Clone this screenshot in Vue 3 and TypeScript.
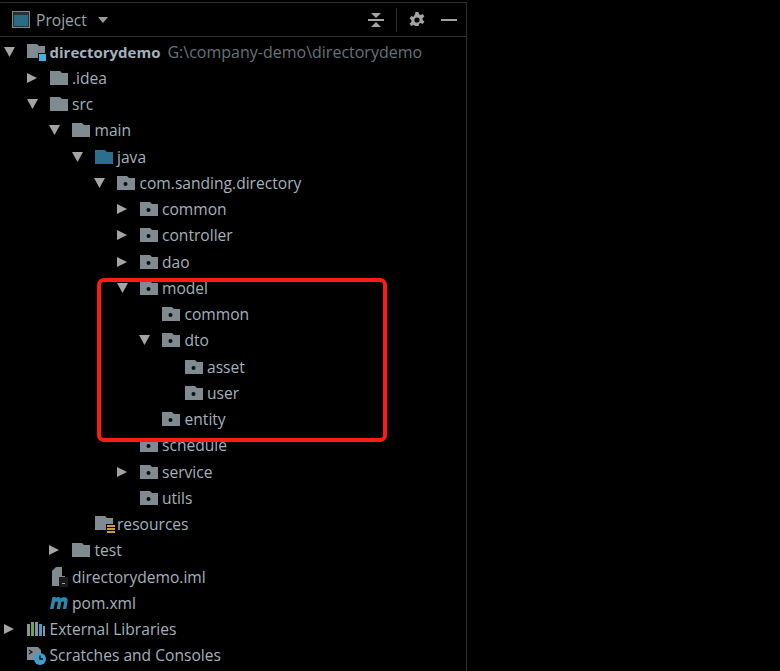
<script setup lang="ts">
type IconKind = 'module' | 'folder' | 'source' | 'package' | 'resources' | 'iml' | 'maven' | 'libs' | 'scratch'

interface TreeRow {
  label: string
  depth: number
  icon: IconKind
  arrow?: 'open' | 'closed'
  bold?: boolean
  hint?: string
}

const rows: TreeRow[] = [
  { label: 'directorydemo', depth: 0, icon: 'module', arrow: 'open', bold: true, hint: 'G:\\company-demo\\directorydemo' },
  { label: '.idea', depth: 1, icon: 'folder', arrow: 'closed' },
  { label: 'src', depth: 1, icon: 'folder', arrow: 'open' },
  { label: 'main', depth: 2, icon: 'folder', arrow: 'open' },
  { label: 'java', depth: 3, icon: 'source', arrow: 'open' },
  { label: 'com.sanding.directory', depth: 4, icon: 'package', arrow: 'open' },
  { label: 'common', depth: 5, icon: 'package', arrow: 'closed' },
  { label: 'controller', depth: 5, icon: 'package', arrow: 'closed' },
  { label: 'dao', depth: 5, icon: 'package', arrow: 'closed' },
  { label: 'model', depth: 5, icon: 'package', arrow: 'open' },
  { label: 'common', depth: 6, icon: 'package' },
  { label: 'dto', depth: 6, icon: 'package', arrow: 'open' },
  { label: 'asset', depth: 7, icon: 'package' },
  { label: 'user', depth: 7, icon: 'package' },
  { label: 'entity', depth: 6, icon: 'package' },
  { label: 'schedule', depth: 5, icon: 'package' },
  { label: 'service', depth: 5, icon: 'package', arrow: 'closed' },
  { label: 'utils', depth: 5, icon: 'package' },
  { label: 'resources', depth: 3, icon: 'resources' },
  { label: 'test', depth: 2, icon: 'folder', arrow: 'closed' },
  { label: 'directorydemo.iml', depth: 1, icon: 'iml' },
  { label: 'pom.xml', depth: 1, icon: 'maven' },
  { label: 'External Libraries', depth: 0, icon: 'libs', arrow: 'closed' },
  { label: 'Scratches and Consoles', depth: 0, icon: 'scratch' },
]

const folderPath = 'M0 0h10l2 2h6v12H0z'
</script>

<template>
  <div class="window">
    <section class="panel">
      <header class="toolbar">
        <svg class="window-icon" width="18" height="17" viewBox="0 0 18 17">
          <rect x="0.5" y="0.5" width="17" height="16" fill="#2a3034" stroke="#7d878e" />
          <rect x="2" y="4" width="14" height="11" fill="#2b6b85" />
        </svg>
        <span class="title">Project</span>
        <svg class="caret" width="10" height="6" viewBox="0 0 10 6"><path d="M0 0h10L5 6z" fill="#9a9a9a" /></svg>
        <div class="actions">
          <svg width="16" height="20" viewBox="0 0 16 20">
            <path d="M3 3h10L8 8zM3 17h10L8 12z" fill="#a3a3a3" />
            <rect x="0" y="9" width="16" height="2" fill="#a3a3a3" />
          </svg>
          <span class="sep"></span>
          <svg width="16" height="16" viewBox="0 0 16 16">
            <path d="M6.5 0h3l.5 2.3 1.7.8 2.1-1.2 1.6 2.6-1.8 1.5v2l1.8 1.5-1.6 2.6-2.1-1.2-1.7.8-.5 2.3h-3L6 13.7l-1.7-.8-2.1 1.2-1.6-2.6 1.8-1.5v-2L.6 6.5l1.6-2.6 2.1 1.2L6 2.3zM8 5.4a2.6 2.6 0 1 0 0 5.2 2.6 2.6 0 0 0 0-5.2z" fill="#a3a3a3" fill-rule="evenodd" />
          </svg>
          <span class="dash"></span>
        </div>
      </header>

      <ul class="tree">
        <li
          v-for="(row, i) in rows"
          :key="i"
          class="row"
          :style="{ paddingLeft: `${4 + row.depth * 22.5}px` }"
        >
          <span class="arrow-slot">
            <svg v-if="row.arrow === 'open'" width="12" height="10" viewBox="0 0 12 10"><path d="M0 0h11L5.500 10z" fill="#a4a4a4" /></svg>
            <svg v-else-if="row.arrow === 'closed'" width="10" height="10" viewBox="0 0 10 10"><path d="M0 0l10 5-10 5z" fill="#a4a4a4" /></svg>
          </span>
          <span class="icon-slot">
            <svg width="20" height="20" viewBox="0 0 20 20">
              <g v-if="row.icon === 'folder'" transform="translate(0 3)"><path :d="folderPath" fill="#7f8b91" /></g>
              <g v-else-if="row.icon === 'source'" transform="translate(0 3)"><path :d="folderPath" fill="#2b6f8c" /></g>
              <g v-else-if="row.icon === 'package'" transform="translate(0 3)">
                <path :d="folderPath" fill="#7f8b91" />
                <circle cx="8.500" cy="8" r="2" fill="#0a0a0a" />
              </g>
              <g v-else-if="row.icon === 'module'" transform="translate(0 2)">
                <path :d="folderPath" fill="#7f8b91" />
                <rect x="11" y="9" width="8" height="8" fill="#000" />
                <rect x="12" y="10" width="7" height="7" fill="#3fb1e3" />
              </g>
              <g v-else-if="row.icon === 'resources'" transform="translate(0 2)">
                <path :d="folderPath" fill="#7f8b91" />
                <rect x="11" y="8" width="9" height="10" fill="#000" />
                <path d="M12 9h8v2h-8zM12 12h8v2h-8zM12 15h8v2h-8z" fill="#d09a3c" />
              </g>
              <g v-else-if="row.icon === 'iml'">
                <path d="M6 0h6v9h3v10H2V4z" fill="#7f8b91" />
                <rect x="9" y="10" width="9" height="10" fill="#1a1a1a" />
                <rect x="12" y="16" width="3" height="1" fill="#a4a4a4" />
              </g>
              <g v-else-if="row.icon === 'maven'" transform="translate(0 -1)">
                <path d="M0 17l2.400-12h3.400l-.2 1.300c1.300-1.500 3.600-1.800 4.700-.2.100.2.200.3.200.4 1.700-1.700 6.300-2.100 7.100.8.200.8 0 1.800-.2 2.800L16.300 17h-3.500l1.200-6.300c.2-1.400-1.400-1.800-2.700-.5L10 17H6.600l1.200-6.300c.2-1.400-1.500-1.800-2.800-.5L3.500 17z" fill="#2f86ad" />
              </g>
              <g v-else-if="row.icon === 'libs'">
                <rect x="0" y="5" width="3" height="12" fill="#8a9499" />
                <rect x="4" y="3" width="3" height="14" fill="#6aa84f" />
                <rect x="8" y="3" width="3" height="14" fill="#8a9499" />
                <rect x="12" y="5" width="3" height="12" fill="#3fa0d0" />
                <rect x="16" y="7" width="2" height="10" fill="#8a9499" />
              </g>
              <g v-else-if="row.icon === 'scratch'">
                <path d="M0 2h11l3 3v4a6 6 0 0 0-6 6H0z" fill="#7f8b91" />
                <path d="M2 5l3 2-3 2" fill="none" stroke="#111" stroke-width="1.200" />
                <circle cx="13" cy="14" r="6" fill="#3b9fd1" />
                <path d="M13 10.500V14h3" fill="none" stroke="#0a0a0a" stroke-width="1.400" />
              </g>
            </svg>
          </span>
          <span class="label" :class="{ bold: row.bold }">{{ row.label }}</span>
          <span v-if="row.hint" class="hint">{{ row.hint }}</span>
        </li>
      </ul>
    </section>
    <div class="highlight"></div>
  </div>
</template>

<style>
html,
body {
  margin: 0;
  background: #000;
}
</style>

<style scoped>
.window {
  position: relative;
  width: 780px;
  height: 671px;
  overflow: hidden;
  background: #000;
  font-family: "Open Sans", "Noto Sans", sans-serif;
}

.panel {
  width: 467px;
  height: 669px;
  margin-top: 2px;
  border-top: 1px solid #2e2e2e;
  border-right: 1px solid #2e2e2e;
  box-sizing: border-box;
}

.toolbar {
  display: flex;
  align-items: center;
  height: 33px;
  padding: 0 9px 0 12px;
  border-bottom: 1px solid #2e2e2e;
}

.title {
  margin-left: 6px;
  font-size: 15.6px;
  color: #98a4ab;
}

.caret {
  margin-left: 11px;
}

.actions {
  display: flex;
  align-items: center;
  margin-left: auto;
}

.sep {
  width: 1px;
  height: 24px;
  margin: 0 12px;
  background: #2e2e2e;
}

.dash {
  width: 16px;
  height: 2px;
  margin-left: 16px;
  background: #a3a3a3;
}

.tree {
  margin: 0;
  padding: 1.6px 0 0;
  list-style: none;
}

.row {
  display: flex;
  align-items: center;
  height: 26.26px;
  font-size: 15.6px;
  white-space: nowrap;
  color: #a3b1bd;
}

.arrow-slot {
  display: flex;
  align-items: center;
  flex: none;
  width: 23px;
}

.icon-slot {
  display: flex;
  align-items: center;
  flex: none;
  width: 22.5px;
}

.bold {
  font-size: 15px;
  font-weight: 700;
}

.hint {
  margin-left: 7px;
  font-size: 16px;
  color: #66727a;
}

.highlight {
  position: absolute;
  left: 97px;
  top: 278px;
  width: 290px;
  height: 164px;
  box-sizing: border-box;
  border: 4px solid #fc1c14;
  border-radius: 7px;
}
</style>
